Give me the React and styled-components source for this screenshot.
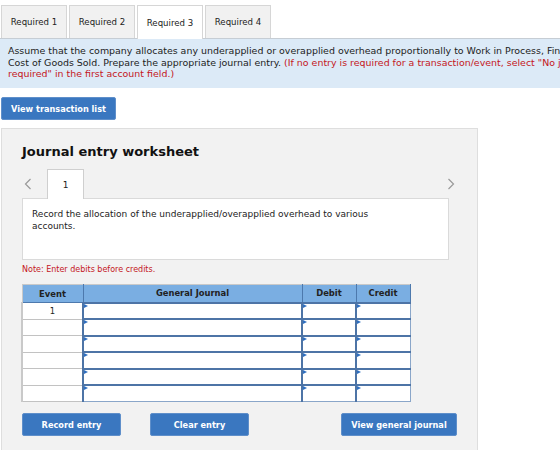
import React from "react";
import styled, { createGlobalStyle } from "styled-components";

const Global = createGlobalStyle`
  html, body { margin: 0; padding: 0; background: #fff; }
  body { font-family: "DejaVu Sans", Verdana, sans-serif; color: #222; }
  * { box-sizing: border-box; }
`;

const Page = styled.div`
  width: 560px;
  height: 450px;
  overflow: hidden;
  padding-top: 5px;
`;

const Tabs = styled.div`
  display: flex;
  gap: 2px;
  padding-left: 1px;
`;

const Tab = styled.div`
  width: 66px;
  display: flex;
  align-items: center;
  justify-content: center;
  font-size: 8.6px;
  color: #222;
  background: ${(p) => (p.$active ? "#fff" : "#f1f1f1")};
  border: 1px solid #d6d6d6;
  border-bottom: none;
  margin-bottom: ${(p) => (p.$active ? "-1px" : "0")};
  height: ${(p) => (p.$active ? "34px" : "33px")};
  position: relative;
  z-index: 1;
`;

const Info = styled.div`
  background: #dceaf7;
  border-top: 1px solid #c6cdd4;
  padding: 6px 0 6px 8px;
  height: 50px;
  font-size: 9.45px;
  line-height: 11.6px;
  white-space: nowrap;
  overflow: hidden;
`;

const Red = styled.span`
  color: #c4161c;
`;

const BlueButton = styled.button`
  width: ${(p) => p.$w}px;
  height: 23px;
  background: #3a77c0;
  border: 1px solid #5f8fca;
  border-radius: 2px;
  color: #fff;
  font-family: "DejaVu Sans", Verdana, sans-serif;
  font-weight: bold;
  font-size: 8.2px;
  padding: 0;
  margin-left: ${(p) => p.$ml || 0}px;
`;

const TopButtonRow = styled.div`
  padding: 9px 0 0 1px;
  display: flex;
`;

const Panel = styled.div`
  margin: 8px 0 0 1px;
  width: 477px;
  height: 340px;
  background: #f2f2f2;
  border: 1px solid #dedede;
  padding: 14px 0 0 20px;
`;

const Heading = styled.h2`
  margin: 0;
  font-size: 13px;
  font-weight: bold;
  color: #111;
  line-height: 17px;
`;

const EntryNav = styled.div`
  display: flex;
  align-items: flex-end;
  margin-top: 9px;
  width: 427px;
  height: 29px;
`;

const Arrow = styled.span`
  width: 25px;
  display: flex;
  justify-content: ${(p) => (p.$right ? "flex-end" : "flex-start")};
  align-self: center;
  padding-left: ${(p) => (p.$right ? 0 : 2)}px;
  margin-left: ${(p) => (p.$right ? "auto" : 0)};
  margin-right: ${(p) => (p.$right ? "-6px" : 0)};
`;

const EntryTab = styled.div`
  width: 37px;
  height: 30px;
  background: #fff;
  border: 1px solid #cfcfcf;
  border-bottom: none;
  display: flex;
  align-items: center;
  justify-content: center;
  font-size: 9px;
  margin-bottom: -1px;
  position: relative;
  z-index: 1;
`;

const Prompt = styled.div`
  width: 427px;
  height: 62px;
  background: #fff;
  border: 1px solid #dadada;
  padding: 9px 9px;
  font-size: 9px;
  line-height: 12px;
`;

const Note = styled.div`
  margin-top: 5px;
  font-size: 8px;
  color: #c4161c;
  line-height: 10px;
`;

const Table = styled.table`
  margin-top: 9px;
  margin-left: -1px;
  border-collapse: collapse;
  table-layout: fixed;
  width: 388px;
`;

const Th = styled.th`
  background: #7aaee2;
  height: 18px;
  font-size: 8.4px;
  font-weight: bold;
  color: #222;
  padding: 0;
  border-top: 1px solid #c9c9c9;
  border-bottom: 1px solid #4d79ad;
  border-left: 1px solid ${(p) => (p.$first ? "#c9c9c9" : "#4d79ad")};
  border-right: 1px solid #4d79ad;
`;

const EventTd = styled.td`
  height: 16.5px;
  padding: 0;
  text-align: center;
  font-size: 8.4px;
  background: #fff;
  border: 1px solid #c2c2c2;
  border-left: 2px solid #c9c9c9;
`;

const InputTd = styled.td`
  height: 16.5px;
  padding: 0;
  background: #fff;
  border: 1px solid #8aa6c9;
  border-top: 2px solid #4d74a6;
  border-left: 2px solid #4d74a6;
  position: relative;
`;

const Tri = styled.span`
  position: absolute;
  top: 0;
  left: 0;
  width: 0;
  height: 0;
  border-top: 2.5px solid transparent;
  border-bottom: 2.5px solid transparent;
  border-left: 4px solid #2f6fc0;
`;

const ActionRow = styled.div`
  display: flex;
  margin-top: 11px;
`;

const Chevron = ({ dir }) => (
  <svg width="8" height="12" viewBox="0 0 8 12">
    <path
      d={dir === "left" ? "M6.5 1 L1.5 6 L6.5 11" : "M1.5 1 L6.5 6 L1.5 11"}
      fill="none"
      stroke="#9a9a9a"
      strokeWidth="1.2"
    />
  </svg>
);

const rows = ["1", "", "", "", "", ""];

export default function App() {
  return (
    <Page>
      <Global />
      <Tabs>
        <Tab>Required 1</Tab>
        <Tab>Required 2</Tab>
        <Tab $active>Required 3</Tab>
        <Tab>Required 4</Tab>
      </Tabs>
      <Info>
        Assume that the company allocates any underapplied or overapplied overhead proportionally to Work in Process, Finished Goods, and
        <br />
        Cost of Goods Sold. Prepare the appropriate journal entry. <Red>(If no entry is required for a transaction/event, select "No journal entry</Red>
        <br />
        <Red>required" in the first account field.)</Red>
      </Info>
      <TopButtonRow>
        <BlueButton $w={115}>View transaction list</BlueButton>
      </TopButtonRow>
      <Panel>
        <Heading>Journal entry worksheet</Heading>
        <EntryNav>
          <Arrow>
            <Chevron dir="left" />
          </Arrow>
          <EntryTab>1</EntryTab>
          <Arrow $right>
            <Chevron dir="right" />
          </Arrow>
        </EntryNav>
        <Prompt>
          Record the allocation of the underapplied/overapplied overhead to various
          <br />
          accounts.
        </Prompt>
        <Note>Note: Enter debits before credits.</Note>
        <Table>
          <colgroup>
            <col style={{ width: 61 }} />
            <col style={{ width: 219 }} />
            <col style={{ width: 54 }} />
            <col style={{ width: 54 }} />
          </colgroup>
          <thead>
            <tr>
              <Th $first>Event</Th>
              <Th>General Journal</Th>
              <Th>Debit</Th>
              <Th>Credit</Th>
            </tr>
          </thead>
          <tbody>
            {rows.map((r, i) => (
              <tr key={i}>
                <EventTd>{r}</EventTd>
                <InputTd>
                  <Tri />
                </InputTd>
                <InputTd>
                  <Tri />
                </InputTd>
                <InputTd>
                  <Tri />
                </InputTd>
              </tr>
            ))}
          </tbody>
        </Table>
        <ActionRow>
          <BlueButton $w={99}>Record entry</BlueButton>
          <BlueButton $w={99} $ml={29}>Clear entry</BlueButton>
          <BlueButton $w={116} $ml={92}>View general journal</BlueButton>
        </ActionRow>
      </Panel>
    </Page>
  );
}
